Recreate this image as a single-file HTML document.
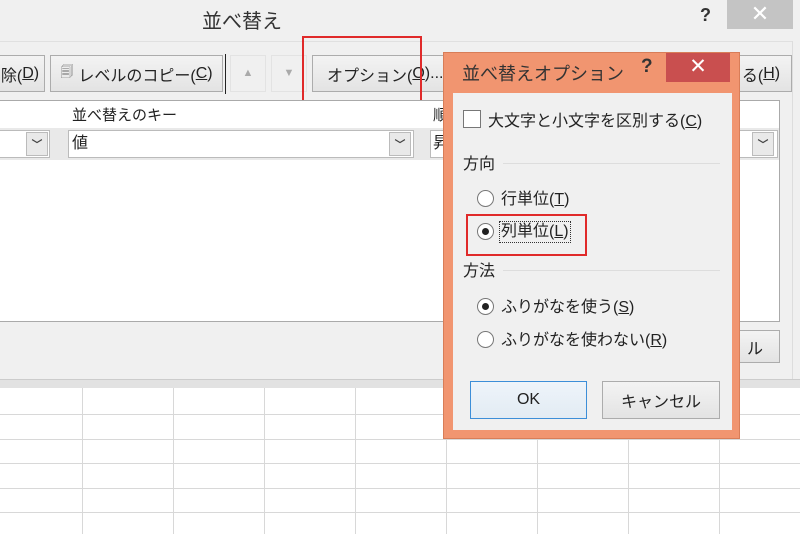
<!DOCTYPE html>
<html><head><meta charset="utf-8"><style>
*{margin:0;padding:0;box-sizing:border-box}
body{width:800px;height:534px;overflow:hidden;position:relative;background:#fff;font-family:"Liberation Sans","Noto Sans CJK JP",sans-serif;color:#222}
.a{position:absolute}
.btn{position:absolute;background:linear-gradient(#f3f3f3,#e3e3e3);border:1px solid #acacac;font-size:16px;display:flex;align-items:center;justify-content:center}
u{text-decoration:underline}
.radio{position:absolute;width:17px;height:17px;border-radius:50%;border:1px solid #777;background:#fff}
.radio.on::after{content:"";position:absolute;left:4px;top:4px;width:7px;height:7px;border-radius:50%;background:#222}
.t{position:absolute;font-size:16px;white-space:nowrap;line-height:20px}
.dd{position:absolute;width:22px;height:24px;border:1px solid #bbb;background:#e9e9e9;font-size:11px;color:#444;display:flex;align-items:center;justify-content:center;font-weight:bold}
</style></head><body>
<div class="a" style="left:0;top:0;width:800px;height:388px;background:#f0f0f0"></div>
<div class="t" style="left:202px;top:10px;font-size:20px;line-height:24px;color:#333">並べ替え</div>
<div class="t" style="left:700px;top:5px;font-size:18px;font-weight:bold;color:#333">?</div>
<div class="a" style="left:727px;top:0;width:66px;height:29px;background:#c4c4c4;color:#fff;font-size:22px;text-align:center;line-height:28px">✕</div>
<div class="a" style="left:0;top:41px;width:792px;height:1px;background:#e0e0e0"></div>
<div class="a" style="left:792px;top:41px;width:1px;height:340px;background:#ddd"></div>
<div class="btn" style="left:-5px;top:55px;width:50px;height:37px">除(<u>D</u>)</div>
<div class="btn" style="left:50px;top:55px;width:173px;height:37px"><span style="font-size:13px;color:#666;margin-right:5px">🗐</span>レベルのコピー(<u>C</u>)</div>
<div class="a" style="left:225px;top:54px;width:1px;height:40px;background:#222"></div>
<div class="a" style="left:230px;top:55px;width:36px;height:37px;border:1px solid #e3e3e3;background:#f0f0f0;color:#aaa;font-size:11px;text-align:center;line-height:35px">▲</div>
<div class="a" style="left:271px;top:55px;width:36px;height:37px;border:1px solid #e3e3e3;background:#f0f0f0;color:#aaa;font-size:11px;text-align:center;line-height:35px">▼</div>
<div class="btn" style="left:312px;top:55px;width:135px;height:37px;justify-content:flex-start;padding-left:14px">オプション(<u>O</u>)...</div>
<div class="btn" style="left:730px;top:55px;width:62px;height:37px">る(<u>H</u>)</div>
<div class="a" style="left:302px;top:36px;width:120px;height:75px;border:2px solid #e02a2a"></div>
<div class="a" style="left:0;top:100px;width:780px;height:222px;background:#fff;border:1px solid #aaa;border-left:none"></div>
<div class="t" style="left:72px;top:106px;font-size:15px">並べ替えのキー</div>
<div class="t" style="left:433px;top:106px;font-size:15px">順</div>
<div class="a" style="left:0;top:128px;width:779px;height:32px;background:#e9e9e9"></div>
<div class="a" style="left:0;top:130px;width:50px;height:28px;background:#fff;border:1px solid #bbb;border-left:none"></div>
<div class="dd" style="left:26px;top:132px">﹀</div>
<div class="a" style="left:68px;top:130px;width:346px;height:28px;background:#fff;border:1px solid #bbb"></div>
<div class="t" style="left:72px;top:134px">値</div>
<div class="dd" style="left:389px;top:132px">﹀</div>
<div class="a" style="left:430px;top:130px;width:348px;height:28px;background:#fff;border:1px solid #bbb"></div>
<div class="t" style="left:433px;top:134px">昇</div>
<div class="dd" style="left:752px;top:132px">﹀</div>
<div class="btn" style="left:730px;top:330px;width:50px;height:33px">ル</div>
<div class="a" style="left:0;top:379px;width:800px;height:9px;background:#e2e2e2;border-top:1px solid #ccc"></div>
<svg class="a" style="left:0;top:388px" width="800" height="146">
<g stroke="#d8d8d8" stroke-width="1">
<line x1="0" y1="26.5" x2="800" y2="26.5"/><line x1="0" y1="51.5" x2="800" y2="51.5"/><line x1="0" y1="75.5" x2="800" y2="75.5"/><line x1="0" y1="100.5" x2="800" y2="100.5"/><line x1="0" y1="124.5" x2="800" y2="124.5"/>
<line x1="82.5" y1="0" x2="82.5" y2="146"/><line x1="173.5" y1="0" x2="173.5" y2="146"/><line x1="264.5" y1="0" x2="264.5" y2="146"/><line x1="355.5" y1="0" x2="355.5" y2="146"/><line x1="446.5" y1="0" x2="446.5" y2="146"/><line x1="537.5" y1="0" x2="537.5" y2="146"/><line x1="628.5" y1="0" x2="628.5" y2="146"/><line x1="719.5" y1="0" x2="719.5" y2="146"/>
</g></svg>
<div class="a" style="left:443px;top:52px;width:297px;height:387px;background:#f19570;border:1px solid #d87d58"></div>
<div class="t" style="left:462px;top:62px;font-size:18px;line-height:24px;color:#333">並べ替えオプション</div>
<div class="t" style="left:641px;top:57px;font-size:19px;font-weight:bold;color:#333">?</div>
<div class="a" style="left:666px;top:53px;width:64px;height:29px;background:#c94f4f;color:#fff;font-size:21px;text-align:center;line-height:28px">✕</div>
<div class="a" style="left:453px;top:93px;width:279px;height:337px;background:#f0f0f0"></div>
<div class="a" style="left:463px;top:110px;width:18px;height:18px;border:1px solid #777;background:#fff"></div>
<div class="t" style="left:488px;top:112px">大文字と小文字を区別する(<u>C</u>)</div>
<div class="t" style="left:463px;top:155px">方向</div>
<div class="a" style="left:503px;top:163px;width:217px;height:1px;background:#ddd"></div>
<div class="radio" style="left:477px;top:190px"></div>
<div class="t" style="left:501px;top:190px">行単位(<u>T</u>)</div>
<div class="radio on" style="left:477px;top:223px"></div>
<div class="t" style="left:500px;top:222px;outline:1px dotted #333;padding:0 1px">列単位(<u>L</u>)</div>
<div class="a" style="left:466px;top:214px;width:121px;height:42px;border:2px solid #e02a2a"></div>
<div class="t" style="left:463px;top:262px">方法</div>
<div class="a" style="left:503px;top:270px;width:217px;height:1px;background:#ddd"></div>
<div class="radio on" style="left:477px;top:298px"></div>
<div class="t" style="left:501px;top:298px">ふりがなを使う(<u>S</u>)</div>
<div class="radio" style="left:477px;top:331px"></div>
<div class="t" style="left:501px;top:331px">ふりがなを使わない(<u>R</u>)</div>
<div class="btn" style="left:470px;top:381px;width:117px;height:38px;border:1px solid #3c8ed8;background:linear-gradient(#eef4fa,#e2ebf3)">OK</div>
<div class="btn" style="left:602px;top:381px;width:118px;height:38px">キャンセル</div>
</body></html>
